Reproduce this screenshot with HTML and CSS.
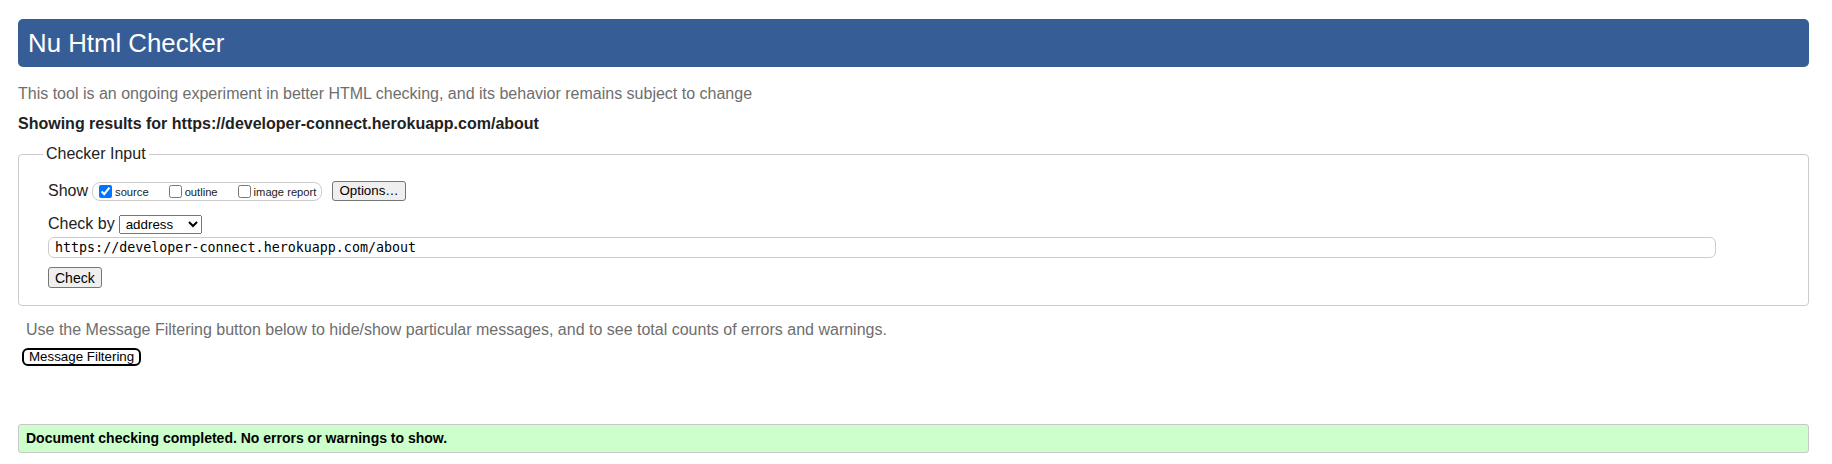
FILE: index.html
```html
<!DOCTYPE html>
<html lang="en">
<head>
<meta charset="utf-8">
<title>Nu Html Checker</title>
<link rel="stylesheet" href="styles.css">
</head>
<body>
<div class="page">
  <h1 class="title">Nu Html Checker</h1>
  <p class="intro">This tool is an ongoing experiment in better HTML checking, and its behavior remains subject to change</p>
  <p class="showing">Showing results for https://developer-connect.herokuapp.com/about</p>
  <fieldset class="checker">
    <legend class="checker-legend">Checker Input</legend>
    <div class="row show-row">
      <span class="row-label">Show</span>
      <span class="show-box">
        <label class="opt"><input type="checkbox" class="cb" checked><span class="opt-text">source</span></label>
        <label class="opt"><input type="checkbox" class="cb"><span class="opt-text">outline</span></label>
        <label class="opt last"><input type="checkbox" class="cb"><span class="opt-text">image report</span></label>
      </span>
      <button class="btn options-btn" type="button">Options…</button>
    </div>
    <div class="row checkby-row">
      <span class="row-label">Check by</span>
      <select class="sel">
        <option>address</option>
      </select>
    </div>
    <div class="row url-row">
      <input class="url" type="text" value="https://developer-connect.herokuapp.com/about">
    </div>
    <div class="row check-row">
      <button class="btn check-btn" type="button">Check</button>
    </div>
  </fieldset>
  <p class="filter-note">Use the Message Filtering button below to hide/show particular messages, and to see total counts of errors and warnings.</p>
  <button class="filter-btn" type="button">Message Filtering</button>
  <p class="success">Document checking completed. No errors or warnings to show.</p>
</div>
</body>
</html>
```

FILE: styles.css
```css
html, body {
  margin: 0;
  padding: 0;
  background: #fff;
}
body {
  font-family: "Liberation Sans", Arial, sans-serif;
  font-size: 16px;
  color: #222;
}
.page {
  padding: 19px 23px 0 18px;
}
.title {
  margin: 0;
  height: 48px;
  box-sizing: border-box;
  padding: 9px 10px;
  background: #365d95;
  color: #fff;
  font-size: 25.8px;
  font-weight: normal;
  line-height: 30px;
  border-radius: 5px;
}
.intro {
  margin: 18px 0 0 0;
  color: #6e6e6e;
  line-height: 18px;
}
.showing {
  margin: 12px 0 0 0;
  font-weight: bold;
  color: #222;
  line-height: 18px;
}
.checker {
  margin: 12px 0 0 0;
  padding: 18px 0 17px 29px;
  border: 1px solid #cccccc;
  border-radius: 4px;
  min-width: 0;
}
.checker-legend {
  margin-left: -5px;
  padding: 0 3px;
  line-height: 18px;
  color: #222;
}
.row {
  display: flex;
  align-items: center;
}
.row-label {
  color: #222;
  margin-right: 4px;
}
.show-row {
  height: 20px;
}
.show-box {
  display: inline-flex;
  align-items: center;
  height: 19px;
  box-sizing: border-box;
  border: 1px solid #cccccc;
  border-radius: 8px;
  padding: 0 5px 0 2px;
}
.opt {
  display: inline-flex;
  align-items: center;
  margin-right: 16px;
  font-size: 11.2px;
  color: #222;
}
.opt.last {
  margin-right: 0;
}
.cb {
  width: 13px;
  height: 13px;
  margin: 2px 3px 1px 4px;
}
.opt-text {
  position: relative;
  top: 1px;
}
.btn {
  font-family: "Liberation Sans", Arial, sans-serif;
  font-size: 13.33px;
  color: #000;
  background: #efefef;
  border: 1px solid #767676;
  border-radius: 3px;
  padding: 1px 6px;
  line-height: 16px;
}
.options-btn {
  margin-left: 10px;
  height: 20px;
}
.checkby-row {
  margin-top: 13px;
  height: 19px;
}
.sel {
  width: 83px;
  height: 19px;
  font-family: "Liberation Sans", Arial, sans-serif;
  font-size: 13.33px;
  color: #000;
  padding: 0 0 0 2px;
  margin: 1px 0 0 0;
}
.url-row {
  margin-top: 4px;
}
.url {
  width: 1668px;
  height: 21px;
  box-sizing: border-box;
  margin: 0;
  padding: 0 6px;
  border: 1px solid #cccccc;
  border-radius: 6px;
  font-family: "DejaVu Sans Mono", monospace;
  font-size: 13.33px;
  color: #000;
  outline: none;
}
.check-row {
  margin-top: 9px;
}
.check-btn {
  height: 21px;
  font-size: 14px;
}
.filter-note {
  margin: 15px 0 0 8px;
  color: #6e6e6e;
  line-height: 18px;
}
.filter-btn {
  display: block;
  margin: 9px 0 0 4px;
  height: 18px;
  box-sizing: border-box;
  padding: 0 5px;
  background: #fff;
  border: 2px solid #000;
  border-radius: 6px;
  font-family: "Liberation Sans", Arial, sans-serif;
  font-size: 13.33px;
  line-height: 14px;
  color: #000;
}
.success {
  margin: 58px 0 0 0;
  height: 29px;
  box-sizing: border-box;
  padding: 5px 7px;
  background: #ccffcc;
  border: 1px solid #c8c8c8;
  border-radius: 3px;
  font-size: 14px;
  font-weight: bold;
  line-height: 17px;
  color: #000;
}
```
